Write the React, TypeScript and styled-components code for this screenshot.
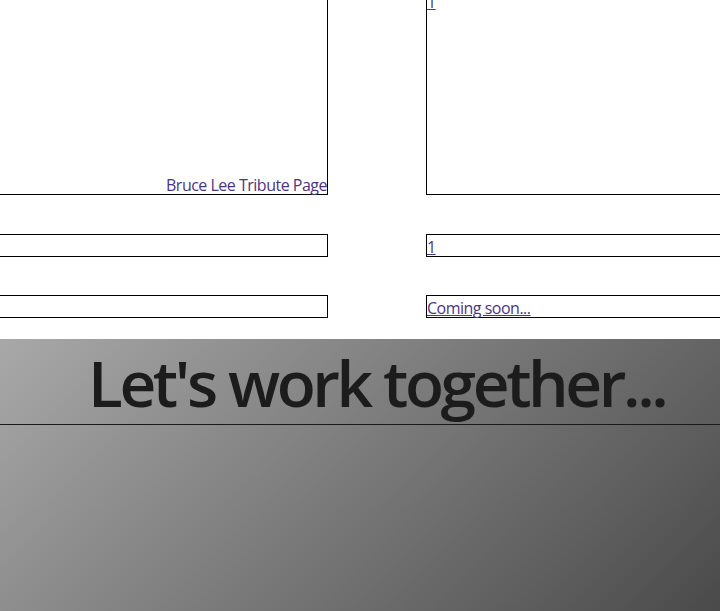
import React from "react";
import styled, { createGlobalStyle } from "styled-components";

const Global = createGlobalStyle`
  html, body {
    margin: 0;
    padding: 0;
    background: #ffffff;
    overflow: hidden;
    font-family: "Open Sans", "Noto Sans", sans-serif;
  }
`;

const Page = styled.div`
  width: 720px;
  height: 611px;
  overflow: hidden;
  display: flex;
  flex-direction: column;
`;

const ProjectGrid = styled.section`
  display: grid;
  grid-template-columns: 368px 368px;
  grid-template-rows: 206px 24px 23px;
  column-gap: 98px;
  row-gap: 38px;
  align-items: end;
  margin: -11px 0 0 -40px;
`;

const Card = styled.div<{ $tall?: boolean; $align?: "start" | "end" }>`
  box-sizing: border-box;
  height: ${(p) => (p.$tall ? "206px" : "23px")};
  border: 1px solid #000;
  display: flex;
  flex-direction: column;
  justify-content: ${(p) => (p.$align === "end" ? "flex-end" : "flex-start")};
  align-items: ${(p) => (p.$align === "end" ? "flex-end" : "flex-start")};
  padding-top: ${(p) => (p.$align === "end" ? "0" : "1px")};
  font-size: 16px;
  line-height: ${(p) => (p.$align === "end" ? "18px" : "22px")};
  letter-spacing: -0.5px;
`;

const Link = styled.a<{ $plain?: boolean }>`
  color: #4b3585;
  text-decoration: ${(p) => (p.$plain ? "none" : "underline")};
  cursor: pointer;
  white-space: nowrap;
`;

const Contact = styled.section`
  margin-top: 21px;
  flex: 1;
  background: linear-gradient(135deg, #a8a8a8 0%, #4a4a4a 100%);
`;

const Heading = styled.h1`
  margin: 0;
  padding: 3px 0 0 88px;
  height: 82px;
  line-height: 82px;
  font-size: 64px;
  font-weight: 600;
  font-stretch: 90%;
  letter-spacing: -3.4px;
  color: #1c1c1c;
  border-bottom: 1px solid #1a1a1a;
  white-space: nowrap;
`;

export default function App() {
  return (
    <>
      <Global />
      <Page>
        <ProjectGrid>
          <Card $tall $align="end">
            <Link $plain>Bruce Lee Tribute Page</Link>
          </Card>
          <Card $tall>
            <Link>1</Link>
          </Card>
          <Card />
          <Card>
            <Link>1</Link>
          </Card>
          <Card />
          <Card>
            <Link>Coming soon...</Link>
          </Card>
        </ProjectGrid>
        <Contact>
          <Heading>Let's work together...</Heading>
        </Contact>
      </Page>
    </>
  );
}
